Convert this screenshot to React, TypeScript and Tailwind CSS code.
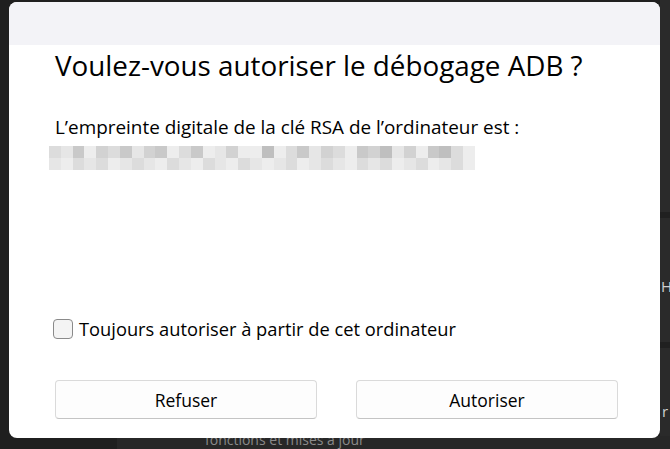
import React from 'react';

// grey cells standing in for the blurred fingerprint
const shades = [
  'bg-[#e6e6e6]',
  'bg-[#dcdcdc]',
  'bg-[#d2d2d2]',
  'bg-[#c9c9c9]',
  'bg-[#ededed]',
  'bg-[#bfbfbf]',
];

const topRow = [1, 0, 3, 4, 2, 1, 3, 0, 2, 3, 4, 1, 3, 4, 0, 2, 4, 4, 5, 4, 1, 3, 0, 2, 1, 4, 3, 2, 5, 0, 2, 4, 3, 5, 1, 4];
const bottomRow = [0, 4, 1, 0, 1, 4, 0, 1, 0, 4, 1, 0, 4, 1, 0, 4, 1, 0, 4, 0, 1, 4, 0, 1, 0, 4, 1, 0, 1, 4, 0, 1, 4, 0, 1, 4];

const Mosaic: React.FC = () => (
  <div className="flex flex-col w-[426px] -ml-[6px]">
    {[topRow, bottomRow].map((row, r) => (
      <div key={r} className="flex h-3">
        {row.map((s, i) => (
          <div key={i} className={`flex-1 ${shades[s]}`} />
        ))}
      </div>
    ))}
  </div>
);

const App: React.FC = () => {
  return (
    <div className="w-[670px] h-[449px] bg-[#1f1f1f] relative overflow-hidden font-['Segoe_UI','Open_Sans',sans-serif]">
      {/* what shows behind the dialog */}
      <div className="absolute right-0 top-0 w-[10px] h-full bg-[#2a2a2a]" />
      <div className="absolute right-0 top-[212px] w-[10px] h-[6px] bg-[#202020]" />
      <div className="absolute right-0 top-[342px] w-[10px] h-[6px] bg-[#202020]" />
      <div className="absolute right-0 top-[274px] w-[10px] h-[24px] overflow-hidden">
        <span className="block pl-[1px] text-[15px] leading-[24px] text-[#cfcfcf]">H</span>
      </div>
      <div className="absolute right-0 top-[399px] w-[10px] h-[24px] overflow-hidden">
        <span className="block pl-[2px] text-[15px] leading-[24px] text-[#cfcfcf]">r</span>
      </div>
      <div className="absolute left-[117px] right-0 top-[436px] h-[20px] bg-[#272727]" />
      <span className="absolute left-[205px] top-[430px] text-[14px] leading-[20px] text-[#8a8a8a]">fonctions et mises à jour</span>

      <div className="absolute left-[9px] top-[2px] w-[651px] h-[436px] bg-white rounded-[8px] overflow-hidden flex flex-col">
        <div className="h-[43px] bg-[#f3f3f7] shrink-0" />
        <div className="flex flex-col px-[46px] flex-1">
          <h1 className="text-[27.8px] leading-[32px] text-black mt-[4px] whitespace-nowrap">Voulez-vous autoriser le débogage ADB ?</h1>
          <p className="text-[18.9px] leading-[24px] text-black mt-[34px] whitespace-nowrap">L’empreinte digitale de la clé RSA de l’ordinateur est :</p>
          <div className="mt-[7px]">
            <Mosaic />
          </div>
          <label className="flex items-center gap-[6px] mt-[145px]">
            <span className="w-[20px] h-[20px] rounded-[4px] border border-[#8a8a8a] bg-[#f4f4f4] -ml-[2px]" />
            <span className="text-[18.3px] text-black">Toujours autoriser à partir de cet ordinateur</span>
          </label>
          <div className="grid grid-cols-2 gap-[39px] mt-[38px] w-[563px]">
            <button className="h-[39px] rounded-[4px] border border-[#dadada] border-b-[#c4c4c4] bg-[#fdfdfd] text-[17.5px] text-black">Refuser</button>
            <button className="h-[39px] rounded-[4px] border border-[#dadada] border-b-[#c4c4c4] bg-[#fdfdfd] text-[17.5px] text-black">Autoriser</button>
          </div>
        </div>
      </div>
    </div>
  );
};

export default App;
